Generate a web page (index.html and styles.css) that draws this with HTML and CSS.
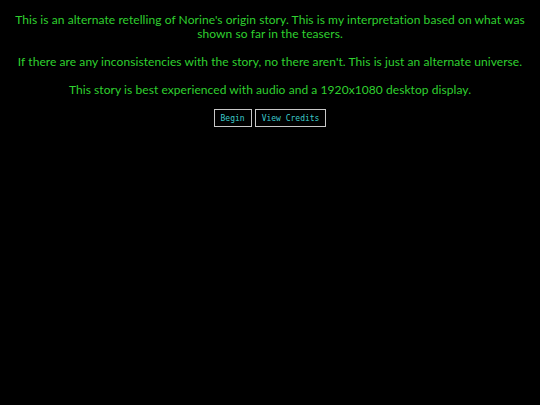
FILE: index.html
```html
<!DOCTYPE html>
<html>
<head>
<meta charset="utf-8">
<link rel="stylesheet" href="styles.css">
</head>
<body>
<div class="intro">
<p>This is an alternate retelling of Norine's origin story. This is my interpretation based on what was shown so far in the teasers.</p>
<p>If there are any inconsistencies with the story, no there aren't. This is just an alternate universe.</p>
<p>This story is best experienced with audio and a 1920x1080 desktop display.</p>
<div class="actions">
<button class="btn">Begin</button>
<button class="btn">View Credits</button>
</div>
</div>
</body>
</html>
```
FILE: styles.css
```css
html, body {
  margin: 0;
  padding: 0;
  background: #000;
}
body {
  width: 540px;
  height: 405px;
}
.intro {
  padding: 13px 8px 0;
  text-align: center;
  color: #2fd12f;
  font-family: Lato, sans-serif;
  font-size: 12px;
  letter-spacing: 0.07px;
  line-height: 14px;
}
.intro p {
  margin: 0 0 14px;
}
.actions {
  display: flex;
  justify-content: center;
  gap: 3px;
  margin-top: -2px;
  letter-spacing: 0;
}
.btn {
  background: #000;
  color: #3ccaca;
  border: 1px solid #c8c8c8;
  font-family: "DejaVu Sans Mono", monospace;
  font-size: 8px;
  height: 18px;
  padding: 0 6px;
}
```
